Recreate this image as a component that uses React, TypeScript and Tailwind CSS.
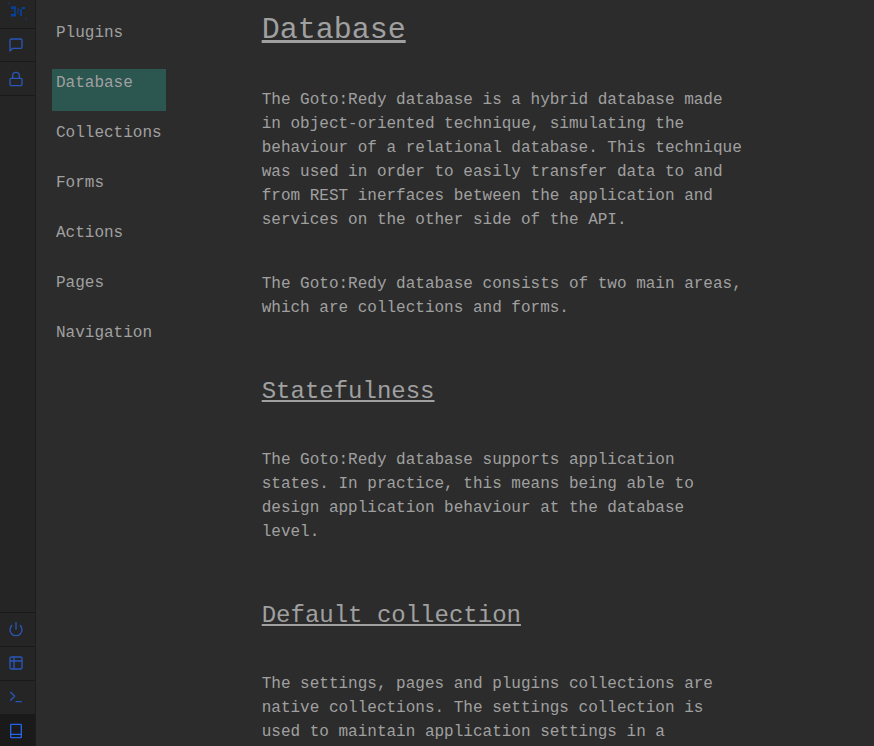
import type { ReactNode } from "react";

const nav = ["Plugins", "Database", "Collections", "Forms", "Actions", "Pages", "Navigation"];

function Icon({ children }: { children: ReactNode }) {
  return (
    <svg
      viewBox="0 0 24 24"
      className="h-4 w-4"
      fill="none"
      stroke="currentColor"
      strokeWidth="2"
      strokeLinecap="round"
      strokeLinejoin="round"
    >
      {children}
    </svg>
  );
}

function Logo() {
  return (
    <svg viewBox="0 0 20 18" className="h-[18px] w-5" fill="#04429f" shapeRendering="crispEdges">
      <rect x="0" y="0" width="2" height="1" opacity="0.8" />
      <rect x="3" y="3" width="5" height="1" opacity="0.6" />
      <rect x="3" y="4" width="5" height="2" opacity="0.9" />
      <rect x="6" y="6" width="2" height="5" opacity="0.7" />
      <rect x="4" y="7" width="2" height="1" opacity="0.4" />
      <rect x="3" y="11" width="5" height="2" />
      <rect x="3" y="13" width="5" height="1" opacity="0.5" />
      <rect x="9" y="5" width="2" height="6" opacity="0.5" />
      <rect x="12" y="6" width="2" height="7" opacity="0.9" />
      <rect x="14" y="4" width="3" height="2" />
      <rect x="17" y="15" width="2" height="2" opacity="0.4" />
    </svg>
  );
}

const cell = "flex shrink-0 items-start border-[#1a1a1a] pl-2 pt-2";

export default function App() {
  return (
    <div className="flex h-[746px] w-[874px] overflow-hidden bg-[#2c2c2c] font-['Liberation_Mono',monospace] text-base text-[#a0a0a0]">
      <aside className="flex w-9 shrink-0 flex-col border-r border-[#1d1d1d] bg-[#252525] text-[#2a56b8]">
        <div className="flex h-[29px] shrink-0 items-start border-b border-[#1a1a1a] pl-2 pt-[3px]">
          <Logo />
        </div>
        <div className={`${cell} h-[33px] border-b`}>
          <Icon>
            <path d="M21 15a2 2 0 0 1-2 2H7l-4 4V5a2 2 0 0 1 2-2h14a2 2 0 0 1 2 2z" />
          </Icon>
        </div>
        <div className="flex h-[34px] shrink-0 items-start border-b border-[#1a1a1a] pl-2 pt-[9px]">
          <Icon>
            <rect x="3" y="11" width="18" height="11" rx="2" />
            <path d="M7 11V7a5 5 0 0 1 10 0v4" />
          </Icon>
        </div>
        <div className="grow" />
        <div className={`${cell} h-[34px] border-t`}>
          <Icon>
            <path d="M18.36 6.64a9 9 0 1 1-12.73 0M12 2v10" />
          </Icon>
        </div>
        <div className={`${cell} h-[34px] border-t`}>
          <Icon>
            <rect x="3" y="3" width="18" height="18" rx="2" />
            <path d="M3 9h18M9 21V3" />
          </Icon>
        </div>
        <div className={`${cell} h-[34px] border-t`}>
          <Icon>
            <path d="m4 17 6-6-6-6M12 19h8" />
          </Icon>
        </div>
        <div className={`${cell} h-8 border-t bg-[#1a1a1a] text-[#2563eb]`}>
          <Icon>
            <rect x="4" y="2" width="16" height="20" rx="1" />
            <path d="M4 17h16" />
          </Icon>
        </div>
      </aside>
      <nav className="ml-4 mt-[19px] flex w-[114px] shrink-0 flex-col gap-2">
        {nav.map((item) => (
          <a
            key={item}
            className={`h-[42px] px-1 pt-0.5 leading-6 ${item === "Database" ? "bg-[#2c5650]" : ""}`}
          >
            {item}
          </a>
        ))}
      </nav>
      <main className="ml-[95.7px] mt-3 flex w-[484px] shrink-0 flex-col leading-6">
        <h1 className="text-3xl underline">Database</h1>
        <p className="mt-10">
          The Goto:Redy database is a hybrid database made in object-oriented technique, simulating
          the behaviour of a relational database. This technique was used in order to easily
          transfer data to and from REST inerfaces between the application and services on the other
          side of the API.
        </p>
        <p className="mt-10">
          The Goto:Redy database consists of two main areas, which are collections and forms.
        </p>
        <h2 className="mt-14 text-2xl underline">Statefulness</h2>
        <p className="mt-10">
          The Goto:Redy database supports application states. In practice, this means being able to
          design application behaviour at the database level.
        </p>
        <h2 className="mt-14 text-2xl underline">Default collection</h2>
        <p className="mt-10">
          The settings, pages and plugins collections are native collections. The settings
          collection is used to maintain application settings in a
        </p>
      </main>
    </div>
  );
}
